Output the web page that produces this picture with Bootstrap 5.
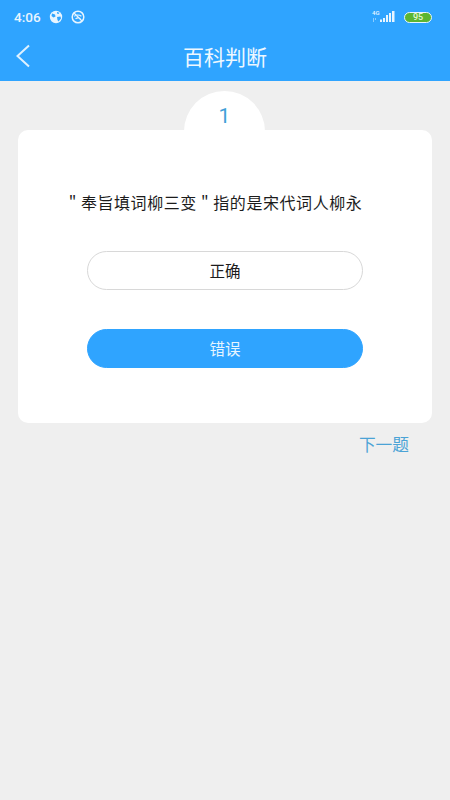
<!doctype html>
<html lang="zh">
<head>
<meta charset="utf-8">
<title>百科判断</title>
<link href="https://cdn.jsdelivr.net/npm/bootstrap@5.3.0/dist/css/bootstrap.min.css" rel="stylesheet">
<style>
html,body{height:100%}
body{background:#efefef;font-family:"Roboto","Noto Sans CJK SC",sans-serif;overflow:hidden}
.app-head{background:#2fa4ff;height:81px;color:#fff}
.stat-row{height:34px;padding:0 18px 0 14px;font-size:13.5px;font-weight:500;color:#e8f5ff}
.stat-ico{width:14px;height:14px;display:block}
.sig-wrap{position:relative;width:24px;height:14px}
.sig-tag{position:absolute;left:0;top:-1px;font-size:6px;line-height:7px;font-weight:500;color:#e8f5ff}
.batt{width:28px;height:11px;border:1.5px solid #e8f5ff;border-radius:6px;background:#5cb531;color:#e4f7d6;font-size:9px;line-height:8px;text-align:center;font-weight:500}
.title-row{height:47px;padding-left:15px}
.title-txt{left:0;right:0;top:0;bottom:0;font-size:21px;line-height:44px;text-align:center;font-family:"Noto Sans CJK SC",sans-serif;color:#eef8ff}
.num-cap{width:81px;height:81px;border-radius:50%;background:#fff;margin:10px 0 -42px 184px;color:#3f9fd8;font-size:21px;line-height:50px;text-align:center;font-family:"Roboto",sans-serif}
.q-card{position:relative;margin:0 18px;height:293px;background:#fff;border-radius:10px;padding-top:61px}
.q-text{font-size:16px;line-height:22px;letter-spacing:.56px;color:#1c1c1c;text-align:center;padding-right:19px;font-family:"Noto Sans CJK SC",sans-serif;white-space:nowrap}
.opt-btn{display:block;width:276px;height:39px;border-radius:19.5px;font-size:15.5px;line-height:35px;padding:0;margin-left:69px;font-family:"Noto Sans CJK SC",sans-serif}
.opt-plain{background:#fff;border:1px solid #d8d8d8;color:#1c1c1c;margin-top:38px}
.opt-on{background:#2fa4ff;border:1px solid #2fa4ff;color:#e6f5ff;margin-top:39px}
.next-link{padding:9px 41px 0 0;text-align:right;font-size:16.7px;line-height:24px;color:#4ba3d6;font-family:"Noto Sans CJK SC",sans-serif}
</style>
</head>
<body>
<header class="app-head">
  <div class="stat-row d-flex align-items-center">
    <span class="me-2">4:06</span>
    <svg class="stat-ico me-2" viewBox="0 0 14 14"><circle cx="7" cy="7" r="6.2" fill="#e8f5ff"/><path d="M3 3.500l3 1 .5 2-2 1-2-1.500zM8 7l3.500-.5.500 2-2.500 3-1-1.500zM8 2l2.500.8L9.500 4 8 3.500z" fill="#2fa4ff"/></svg>
    <svg class="stat-ico" viewBox="0 0 14 14" fill="none" stroke="#e8f5ff"><circle cx="7" cy="7" r="5.800" stroke-width="1.500"/><path d="M3.200 6.200c2-1.600 5.200-1.600 7.200 0M4.500 8.800c1.700-1.200 3.800-1.200 5 0M3 3l8 8" stroke-width="1.200"/></svg>
    <div class="sig-wrap ms-auto me-2">
      <span class="sig-tag">4G</span>
      <svg width="24" height="14" viewBox="0 0 24 14" class="d-block"><path d="M8 9.500h2V12H8zM11 8h2v4h-2zM14 5h2v7h-2zM17 3h2v9h-2zM20 1h2.500v11H20z" fill="#e8f5ff"/><path d="M1 9h4M1 11h2" stroke="#e8f5ff" stroke-width="1" stroke-dasharray="1 1"/></svg>
    </div>
    <div class="batt">95</div>
  </div>
  <div class="title-row position-relative d-flex align-items-center">
    <svg width="16" height="24" viewBox="0 0 16 24" fill="none" stroke="#dff1ff" stroke-width="2" class="mb-1"><path d="M14 1.500 2.500 12 14 22.500"/></svg>
    <div class="title-txt position-absolute">百科判断</div>
  </div>
</header>
<main>
  <div class="num-cap">1</div>
  <section class="q-card">
    <p class="q-text mb-0">" 奉旨填词柳三变 " 指的是宋代词人柳永</p>
    <button type="button" class="btn opt-btn opt-plain">正确</button>
    <button type="button" class="btn opt-btn opt-on">错误</button>
  </section>
  <div class="next-link">下一题</div>
</main>
<script src="https://cdn.jsdelivr.net/npm/bootstrap@5.3.0/dist/js/bootstrap.bundle.min.js"></script>
</body>
</html>
